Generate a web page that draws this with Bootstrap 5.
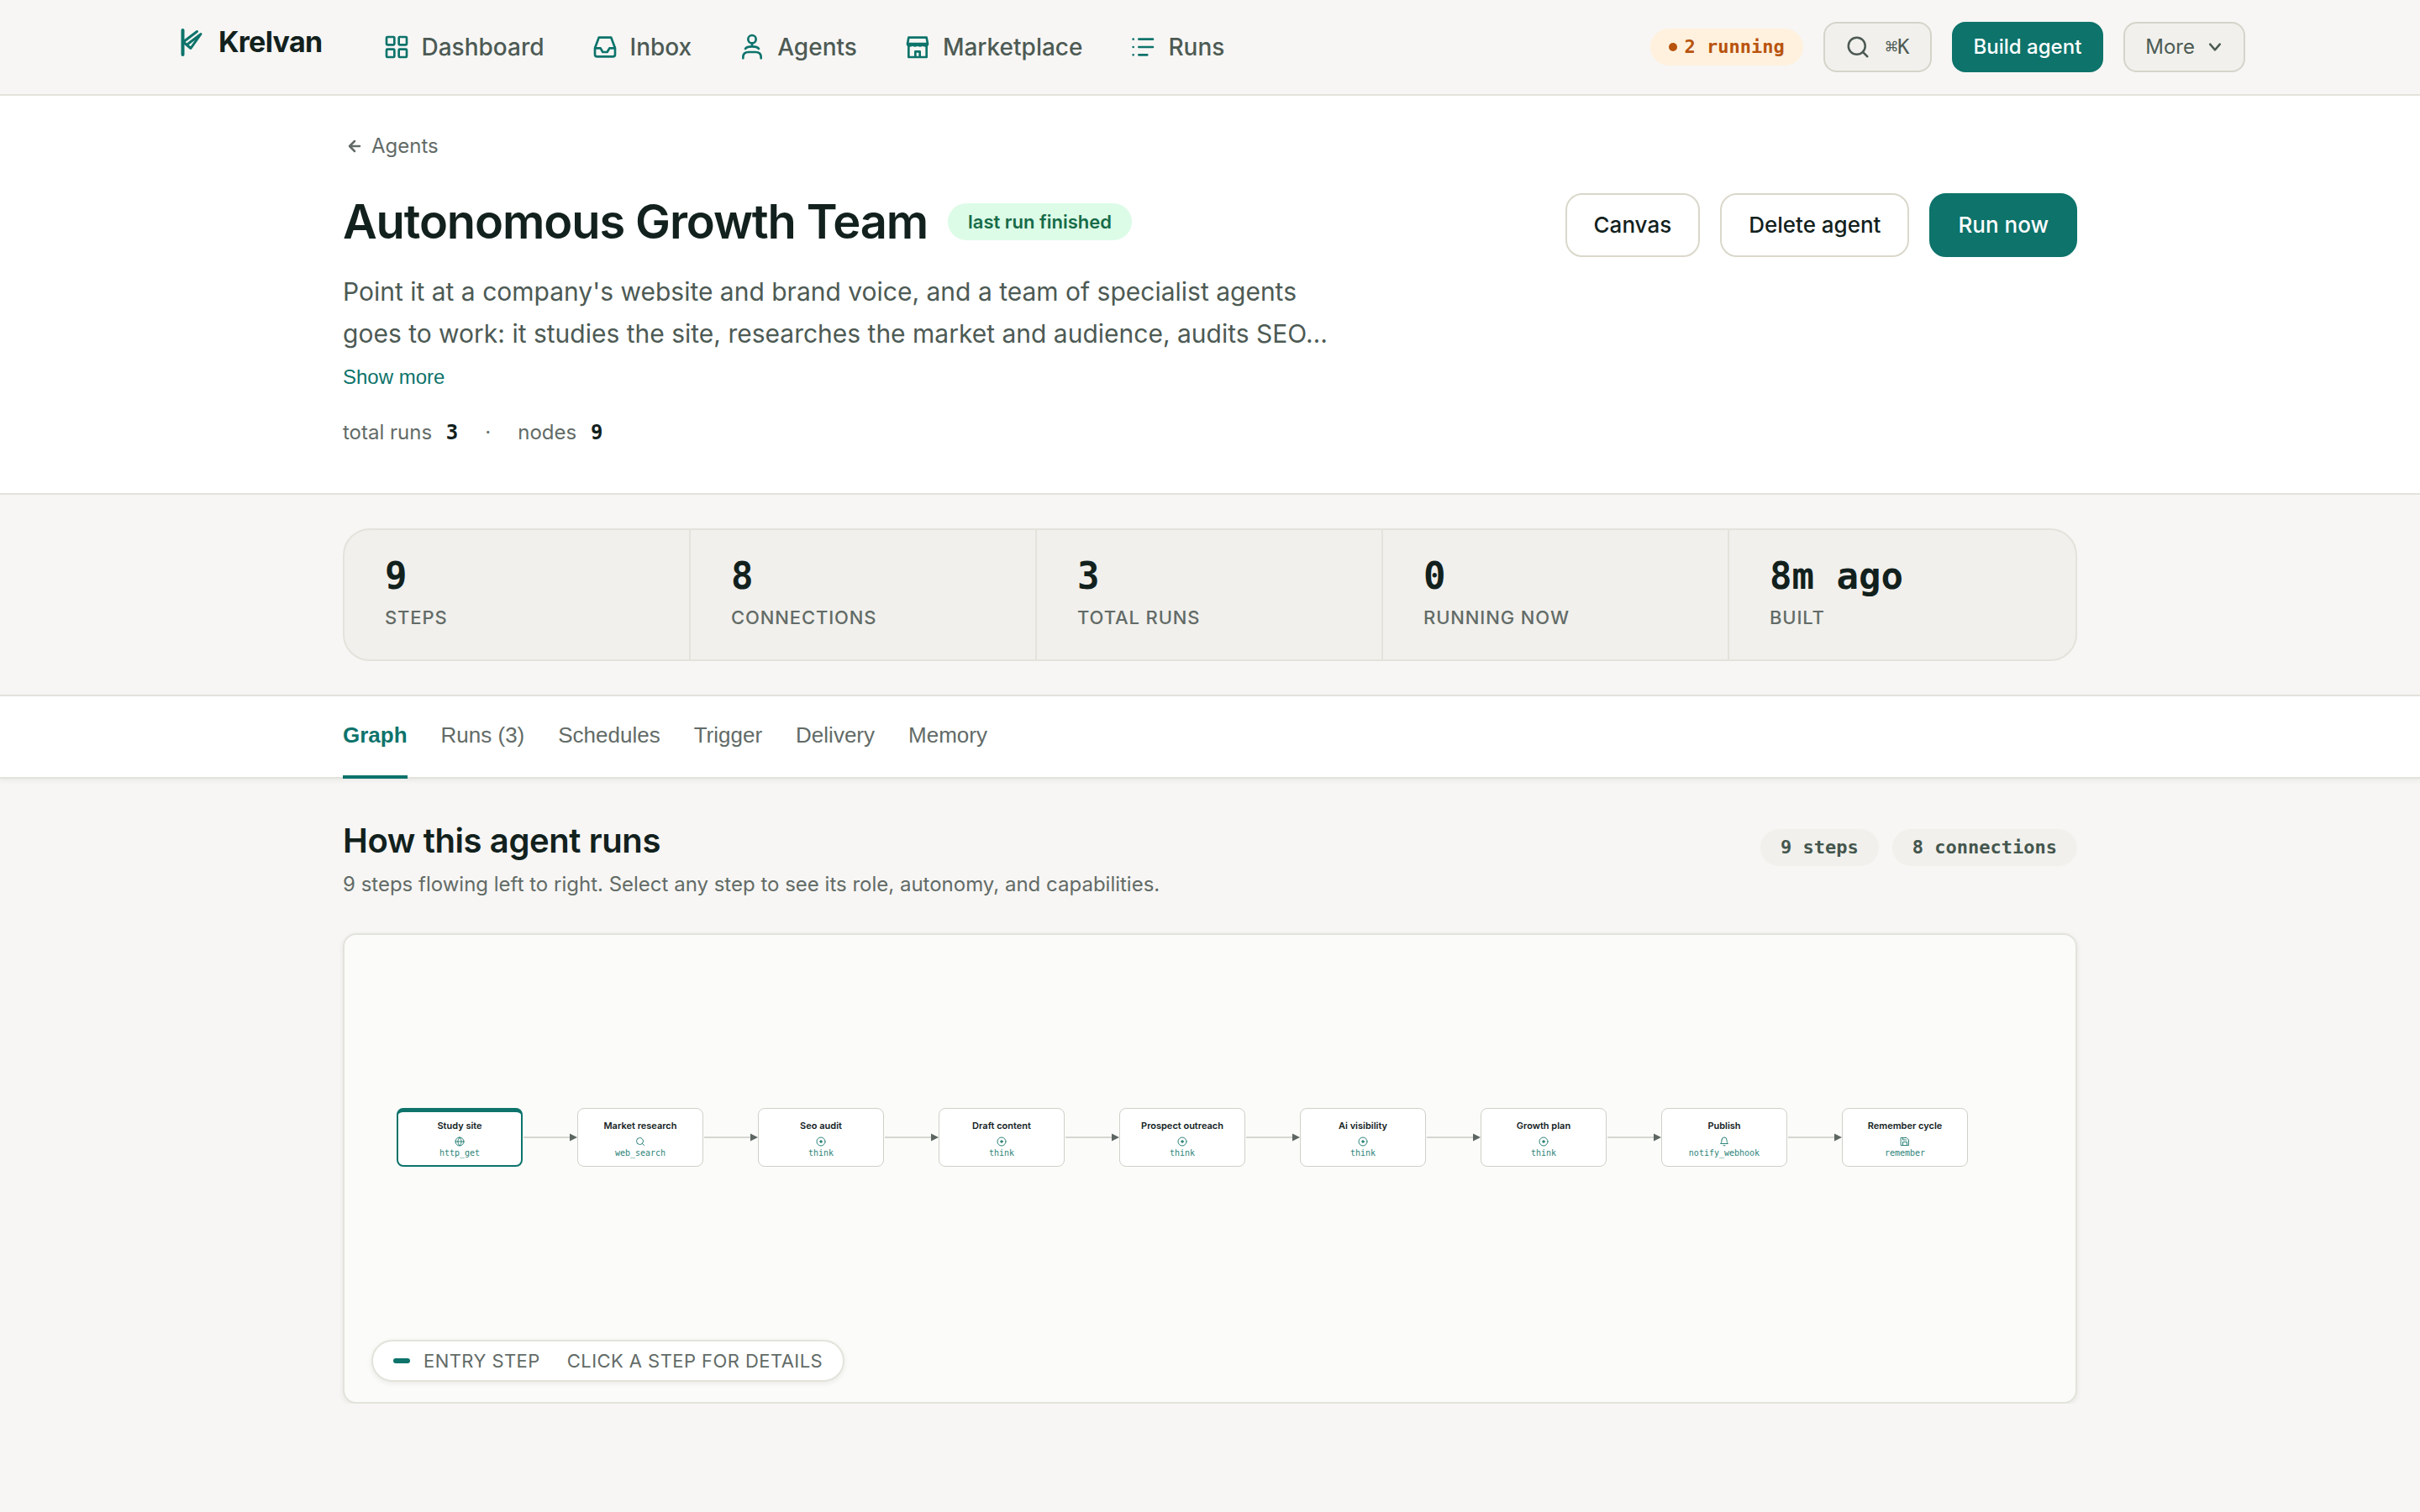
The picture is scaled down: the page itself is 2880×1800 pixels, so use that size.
<!DOCTYPE html>
<html lang="en">
<head>
<meta charset="utf-8">
<meta name="viewport" content="width=device-width, initial-scale=1">
<title>Autonomous Growth Team - Krelvan</title>
<link href="https://cdn.jsdelivr.net/npm/bootstrap@5.3.0/dist/css/bootstrap.min.css" rel="stylesheet">
<style>
:root{--teal:#0d736b;--ink:#12211d;--soft:#4d5a54;--muted:#626b67;--line:#e3e3dc;--paper:#f7f6f4;--sunk:#f1f0ec}
body{background:var(--paper);color:var(--ink);font-family:Inter,"Liberation Sans",sans-serif;font-size:24px;line-height:32px}
a{text-decoration:none}
.mono{font-family:"DejaVu Sans Mono","Liberation Mono",monospace}
.ico{fill:none;stroke:currentColor;stroke-width:2;stroke-linecap:round;stroke-linejoin:round;flex:none}
.topbar{border-bottom:2px solid var(--line);padding:26px 0}
.wide{max-width:2560px;padding:0 48px;margin:0 auto;width:100%}
.page{max-width:2160px;padding:0 48px;margin:0 auto;width:100%}
.brand{font-size:34px;line-height:48px;font-weight:700;letter-spacing:-.02em;color:var(--ink);gap:12px;padding-bottom:12px}
.brand svg{color:var(--teal)}
.mainnav{gap:56px;margin-left:72px}
.mainnav a{color:var(--soft);font-size:28px;font-weight:500;gap:14px}
.mainnav svg{color:var(--teal)}
.tools{gap:24px}
.chip{border-radius:22px;font-size:22px;line-height:28px;padding:8px 24px;font-weight:600;white-space:nowrap}
.chip-run{background:#fff1de;color:#b8530d;font-weight:700;gap:8px;padding:8px 22px}
.chip-run i{width:10px;height:10px;border-radius:50%;background:currentColor}
.chip-ok{background:#dcfce7;color:#176b49}
.chip-grey{background:var(--sunk);color:#44564e;font-weight:700}
.btn{--bs-btn-font-size:24px;--bs-btn-line-height:32px;--bs-btn-font-weight:500;white-space:nowrap}
.btn-top{--bs-btn-padding-x:24px;--bs-btn-padding-y:12px;--bs-btn-border-width:2px;--bs-btn-border-radius:16px;--bs-btn-bg:var(--sunk);--bs-btn-border-color:#d5d4ca;--bs-btn-color:var(--soft);--bs-btn-font-weight:400}
.btn-find{gap:18px}
.btn-more{gap:14px}
.btn-big{--bs-btn-padding-x:32px;--bs-btn-padding-y:20px;--bs-btn-border-width:2px;--bs-btn-border-radius:20px;--bs-btn-font-size:26px;--bs-btn-bg:#fff;--bs-btn-border-color:#dad8cb;--bs-btn-color:var(--ink)}
.btn-teal{--bs-btn-bg:var(--teal);--bs-btn-border-color:var(--teal);--bs-btn-color:#fff;--bs-btn-font-weight:500}
.hero{background:#fff;border-bottom:2px solid var(--line);padding:44px 0 56px}
.back{color:var(--muted);gap:6px;margin-bottom:40px}
.hero h1{font-size:56px;line-height:68px;font-weight:600;letter-spacing:-.02em;margin:0}
.about{color:var(--soft);font-size:30px;line-height:50px;max-width:1200px;margin:24px 0 10px}
.sys{font-family:"Liberation Sans",Arial,sans-serif}
.showmore{--bs-btn-padding-x:0px;--bs-btn-padding-y:0px;--bs-btn-color:var(--teal);--bs-btn-border-width:0;--bs-btn-font-weight:400}
.facts{color:var(--muted);margin-top:34px;gap:32px}
.facts b{color:var(--ink);margin-left:10px}
.stats{background:var(--sunk);border:2px solid var(--line);border-radius:32px;margin:40px 0}
.stats>div{padding:26px 48px 34px}
.stats>div:not(:last-child){border-right:2px solid var(--line)}
.stats b{display:block;font-size:44px;line-height:58px;margin-bottom:4px}
.cap-label{font-size:22px;line-height:32px;color:var(--muted);text-transform:uppercase}
.stats .cap-label{display:block;letter-spacing:.04em;font-weight:500}
.tabbar{background:#fff;border-top:2px solid var(--line);border-bottom:2px solid var(--line);box-shadow:0 2px 6px rgba(30,40,30,.07)}
.tabbar .nav{gap:40px;margin-bottom:-2px}
.tabbar .nav-link{background:transparent;padding:30px 0 32px;line-height:32px;font-size:26px;color:var(--muted);border:0;border-bottom:4px solid transparent;border-radius:0}
.tabbar .nav-link.active{color:var(--teal);border-color:var(--teal);font-weight:700}
.flowhead{padding:48px 0 42px}
.flowhead h2{font-size:40px;line-height:52px;font-weight:600;letter-spacing:-.01em;margin:0 0 10px}
.flowhead p{color:var(--muted)}
.counts{padding-top:12px}
.canvas{background:#fbfbf9;border:2px solid var(--line);border-radius:16px;min-height:560px;padding:0 62px 74px;box-shadow:0 2px 6px rgba(30,40,30,.08)}
.node{width:150px;height:70px;background:#fff;border:1px solid #cfd0c8;border-radius:8px;padding:14px 0 0;line-height:12px;font-size:11px;font-weight:600;color:var(--ink);flex:none}
.node svg{color:#2c8378;margin:7px 0 2px}
.node .mono{color:#2c8378;font-size:10px;font-weight:400}
.node.entry{border:2px solid var(--teal);border-top-width:5px;padding-top:10px}
.wire{flex:none}
.legend{left:32px;bottom:24px;background:#fff;border:2px solid var(--line);border-radius:25px;padding:7px 24px;gap:32px;letter-spacing:.02em;box-shadow:0 2px 6px rgba(30,40,30,.08)}
.legend i{width:20px;height:6px;border-radius:3px;background:var(--teal);margin-right:16px}
</style>
<script src="https://cdn.jsdelivr.net/npm/bootstrap@5.3.0/dist/js/bootstrap.bundle.min.js"></script>
</head>
<body>
<svg class="d-none" aria-hidden="true">
  <symbol id="target" viewBox="0 0 24 24"><circle cx="12" cy="12" r="10"/><circle cx="12" cy="12" r="2.5" fill="currentColor"/></symbol>
  <symbol id="glass" viewBox="0 0 24 24"><circle cx="11" cy="11" r="8"/><path d="m21 21-4.3-4.3"/></symbol>
  <symbol id="wire" viewBox="0 0 65 12"><path d="M1 6H58" stroke="#c9cbc4" stroke-width="1.5"/><path d="M56 1.5 65 6l-9 4.500z" fill="#5d6662" stroke="none"/></symbol>
</svg>

<header class="topbar">
  <div class="wide d-flex align-items-center">
    <a class="brand d-flex align-items-center" href="#">
      <svg class="ico" width="40" height="40" viewBox="0 0 40 40"><path d="M9.500 6v29" stroke-width="4"/><path d="M10 20 26.500 7.500M31 10.500 19 27.500l-7-6M30.500 11 16 22" stroke-width="3"/></svg>Krelvan</a>
    <nav class="mainnav d-flex align-items-center">
      <a class="d-flex align-items-center" href="#"><svg class="ico" width="32" height="32" viewBox="0 0 24 24"><rect x="3" y="3" width="7" height="7" rx=".8"/><rect x="14" y="3" width="7" height="7" rx=".8"/><rect x="3" y="14" width="7" height="7" rx=".8"/><rect x="14" y="14" width="7" height="7" rx=".8"/></svg>Dashboard</a>
      <a class="d-flex align-items-center" href="#"><svg class="ico" width="32" height="32" viewBox="0 0 24 24"><path d="M3 13h5l2 3.500h4l2-3.500h5M6.500 3.500h11L21 13v5.500a2 2 0 0 1-2 2H5a2 2 0 0 1-2-2V13z"/></svg>Inbox</a>
      <a class="d-flex align-items-center" href="#"><svg class="ico" width="32" height="32" viewBox="0 0 24 24"><circle cx="12" cy="5" r="3.500"/><path d="M12 8.500v3M6 13.500c1-1.500 2.500-2 6-2s5 .5 6 2M4 22v-1c0-3 2-4.500 5-4.500h6c3 0 5 1.500 5 4.500v1"/></svg>Agents</a>
      <a class="d-flex align-items-center" href="#"><svg class="ico" width="32" height="32" viewBox="0 0 24 24"><path d="M4 3.500h16l1 5.500H3zM3 9c0 2.500 4 2.500 4.500 0 .5 2.500 4 2.500 4.500 0 .5 2.500 4 2.500 4.500 0 .5 2.500 4.500 2.500 4.500 0M4 11v10h16V11M10 21v-5h4v5"/></svg>Marketplace</a>
      <a class="d-flex align-items-center" href="#"><svg class="ico" width="32" height="32" viewBox="0 0 24 24"><path d="M8.500 5H21M8.500 12H21M8.500 19H16M3.500 5h.01M3.500 12h.01M3.500 19h.01"/></svg>Runs</a>
    </nav>
    <div class="tools d-flex align-items-center ms-auto">
      <span class="chip chip-run mono d-flex align-items-center"><i></i>2 running</span>
      <button type="button" class="btn btn-top btn-find d-flex align-items-center" aria-label="Search"><svg class="ico" width="30" height="30"><use href="#glass"/></svg><span class="mono">⌘K</span></button>
      <button type="button" class="btn btn-top btn-teal">Build agent</button>
      <button type="button" class="btn btn-top btn-more d-flex align-items-center">More<svg class="ico" width="20" height="20" viewBox="0 0 24 24"><path d="m5 8 7 8 7-8" stroke-width="3"/></svg></button>
    </div>
  </div>
</header>

<main>
  <section class="hero">
    <div class="page">
      <a class="back d-inline-flex align-items-center" href="#"><svg class="ico" width="28" height="28" viewBox="0 0 28 28"><path d="M20 14H9M14 8l-6 6 6 6" stroke-width="2.500"/></svg>Agents</a>
      <div class="d-flex justify-content-between align-items-start">
        <div>
          <div class="d-flex align-items-center gap-4"><h1>Autonomous Growth Team</h1><span class="chip chip-ok">last run finished</span></div>
          <p class="about">Point it at a company's website and brand voice, and a team of specialist agents goes to work: it studies the site, researches the market and audience, audits SEO…</p>
          <button type="button" class="btn showmore sys">Show more</button>
          <div class="facts d-flex"><span>total runs <b class="mono">3</b></span><span>·</span><span>nodes <b class="mono">9</b></span></div>
        </div>
        <div class="tools d-flex">
          <button type="button" class="btn btn-big">Canvas</button>
          <button type="button" class="btn btn-big">Delete agent</button>
          <button type="button" class="btn btn-big btn-teal">Run now</button>
        </div>
      </div>
    </div>
  </section>

  <div class="page">
    <section class="stats row row-cols-5 g-0">
      <div><b class="mono">9</b><span class="cap-label">Steps</span></div>
      <div><b class="mono">8</b><span class="cap-label">Connections</span></div>
      <div><b class="mono">3</b><span class="cap-label">Total runs</span></div>
      <div><b class="mono">0</b><span class="cap-label">Running now</span></div>
      <div><b class="mono">8m ago</b><span class="cap-label">Built</span></div>
    </section>
  </div>

  <div class="tabbar">
    <div class="page">
      <div class="nav sys" role="tablist">
        <button type="button" class="nav-link active" role="tab" aria-selected="true">Graph</button>
        <button type="button" class="nav-link" role="tab">Runs (3)</button>
        <button type="button" class="nav-link" role="tab">Schedules</button>
        <button type="button" class="nav-link" role="tab">Trigger</button>
        <button type="button" class="nav-link" role="tab">Delivery</button>
        <button type="button" class="nav-link" role="tab">Memory</button>
      </div>
    </div>
  </div>

  <section class="page">
    <div class="flowhead d-flex justify-content-between">
      <div><h2>How this agent runs</h2><p class="mb-0">9 steps flowing left to right. Select any step to see its role, autonomy, and capabilities.</p></div>
      <div class="counts d-flex align-items-start gap-3"><span class="chip chip-grey mono">9 steps</span><span class="chip chip-grey mono">8 connections</span></div>
    </div>
    <div class="canvas position-relative d-flex align-items-center">
      <div class="d-flex align-items-center">
        <button type="button" class="node entry d-flex flex-column align-items-center">Study site<svg class="ico" width="12" height="12" viewBox="0 0 24 24"><circle cx="12" cy="12" r="10"/><path d="M2 12h20M12 2c-5.500 6-5.500 14 0 20 5.500-6 5.500-14 0-20"/></svg><span class="mono">http_get</span></button>
        <svg class="wire" width="65" height="12"><use href="#wire"/></svg>
        <button type="button" class="node d-flex flex-column align-items-center">Market research<svg class="ico" width="12" height="12"><use href="#glass"/></svg><span class="mono">web_search</span></button>
        <svg class="wire" width="65" height="12"><use href="#wire"/></svg>
        <button type="button" class="node d-flex flex-column align-items-center">Seo audit<svg class="ico" width="12" height="12"><use href="#target"/></svg><span class="mono">think</span></button>
        <svg class="wire" width="65" height="12"><use href="#wire"/></svg>
        <button type="button" class="node d-flex flex-column align-items-center">Draft content<svg class="ico" width="12" height="12"><use href="#target"/></svg><span class="mono">think</span></button>
        <svg class="wire" width="65" height="12"><use href="#wire"/></svg>
        <button type="button" class="node d-flex flex-column align-items-center">Prospect outreach<svg class="ico" width="12" height="12"><use href="#target"/></svg><span class="mono">think</span></button>
        <svg class="wire" width="65" height="12"><use href="#wire"/></svg>
        <button type="button" class="node d-flex flex-column align-items-center">Ai visibility<svg class="ico" width="12" height="12"><use href="#target"/></svg><span class="mono">think</span></button>
        <svg class="wire" width="65" height="12"><use href="#wire"/></svg>
        <button type="button" class="node d-flex flex-column align-items-center">Growth plan<svg class="ico" width="12" height="12"><use href="#target"/></svg><span class="mono">think</span></button>
        <svg class="wire" width="65" height="12"><use href="#wire"/></svg>
        <button type="button" class="node d-flex flex-column align-items-center">Publish<svg class="ico" width="12" height="12" viewBox="0 0 24 24"><path d="M6 8a6 6 0 0 1 12 0c0 7 3 9 3 9H3s3-2 3-9M10 21.500h4"/></svg><span class="mono">notify_webhook</span></button>
        <svg class="wire" width="65" height="12"><use href="#wire"/></svg>
        <button type="button" class="node d-flex flex-column align-items-center">Remember cycle<svg class="ico" width="12" height="12" viewBox="0 0 24 24"><path d="M3 3h13l5 5v13H3zM7 3v5h8M7 21v-8h10v8"/></svg><span class="mono">remember</span></button>
      </div>
      <div class="legend position-absolute d-flex cap-label"><span class="d-flex align-items-center"><i></i>Entry step</span><span>Click a step for details</span></div>
    </div>
  </section>
</main>
</body>
</html>
